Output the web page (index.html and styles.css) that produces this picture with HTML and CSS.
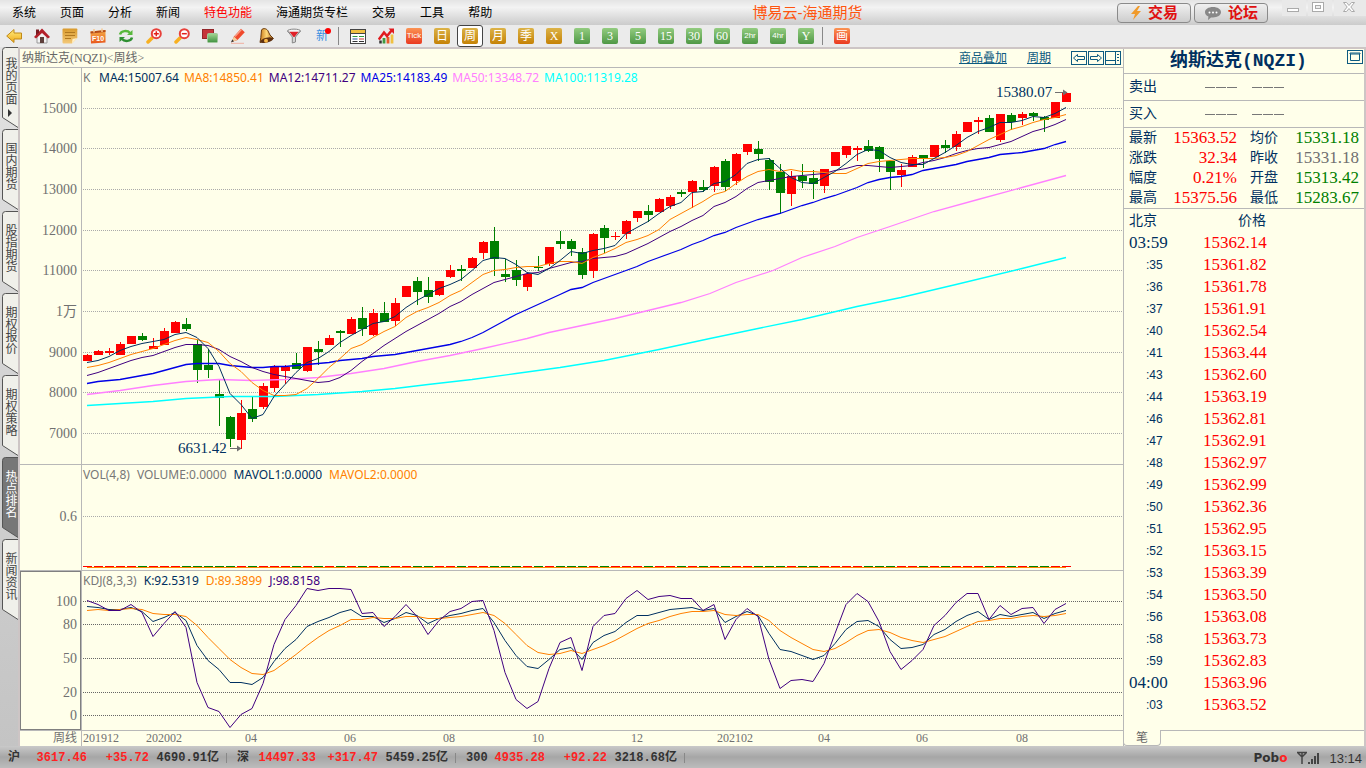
FILE: index.html
```html
<!DOCTYPE html>
<html lang="zh-CN">
<head>
<meta charset="utf-8">
<title>博易云-海通期货</title>
<link rel="stylesheet" href="styles.css">
</head>
<body>
<svg class="defs" aria-hidden="true">
  <defs>
    <linearGradient id="gold" x1="0" y1="0" x2="0" y2="1"><stop offset="0" stop-color="#ffee80"/><stop offset="1" stop-color="#f0a818"/></linearGradient>
    <linearGradient id="green" x1="0" y1="0" x2="0" y2="1"><stop offset="0" stop-color="#a5d694"/><stop offset="1" stop-color="#3f9140"/></linearGradient>
    <linearGradient id="cal" x1="0" y1="0" x2="0" y2="1"><stop offset="0" stop-color="#f6b04a"/><stop offset="1" stop-color="#e8561c"/></linearGradient>
    <linearGradient id="note" x1="0" y1="0" x2="0" y2="1"><stop offset="0" stop-color="#d99a2c"/><stop offset="1" stop-color="#f3c878"/></linearGradient>
    <linearGradient id="bell" x1="0" y1="0" x2="1" y2="0"><stop offset="0" stop-color="#c87818"/><stop offset=".5" stop-color="#ffd878"/><stop offset="1" stop-color="#a85c10"/></linearGradient>
    <symbol id="tab" viewBox="0 0 16 82"><path d="M16 .5H3.500Q.5.5.5 3.500V70.500L16 80.500" /></symbol>
  </defs>
</svg>

<header class="titlebar">
  <nav class="menu">
    <button>系统</button><button>页面</button><button>分析</button><button>新闻</button><button class="hot">特色功能</button><button>海通期货专栏</button><button>交易</button><button>工具</button><button>帮助</button>
  </nav>
  <h1 class="app-title">博易云-海通期货</h1>
  <div class="title-actions">
    <button class="pill"><svg width="12" height="16" viewBox="0 0 12 16"><path d="M8 1 1 9h4l-2 6 8-9H7l3-5z" fill="#f09a2a"/></svg>交易</button>
    <button class="pill"><svg width="18" height="16" viewBox="0 0 18 16"><path d="M9 2c4.500 0 8 2.200 8 5.200s-3.500 5.200-8 5.200l-2 0-3 2.600.4-3.400C2.200 10.600 1 9 1 7.200 1 4.200 4.500 2 9 2z" fill="#888"/><g fill="#fff"><circle cx="5.500" cy="7.500" r="1"/><circle cx="9" cy="7.500" r="1"/><circle cx="12.500" cy="7.500" r="1"/></g></svg>论坛</button>
    <div class="window-controls">
      <button aria-label="最小化"><svg width="24" height="16"><rect x="5.500" y="8.500" width="11" height="3" fill="#fff" stroke="#aaa"/></svg></button>
      <button aria-label="最大化"><svg width="24" height="16"><rect x="4.500" y="2.500" width="11" height="9" fill="#fff" stroke="#aaa"/><rect x="7.500" y="5.500" width="5" height="3" fill="#eee" stroke="#aaa"/></svg></button>
      <button aria-label="关闭"><svg width="32" height="16"><path d="M9.500 2.500h3L15 5.500l2.500-3h3L16.800 7l3.700 4.500h-3L15 8.500l-2.500 3h-3L13.200 7z" fill="#fff" stroke="#aaa"/></svg></button>
    </div>
  </div>
</header>

<div class="toolbar">
  <button aria-label="后退"><svg viewBox="0 0 16 16"><path d="M8 1.500V5h7.500v6H8v3.500L.7 8z" fill="url(#gold)" stroke="#c08a18"/></svg></button>
  <button aria-label="首页"><svg viewBox="0 0 16 16"><path d="M3 8v7h10V8L8 3z" fill="#f2f2f2" stroke="#999"/><path d="M0 9 8 .5 16 9l-2 1.500L8 5l-6 5.500z" fill="#b3202a"/><path d="M2 1.500h3v3L2 7.500z" fill="#7a1a20"/><rect x="6" y="9" width="4" height="6" fill="#5e3f3a"/></svg></button>
  <button aria-label="便签"><svg viewBox="0 0 16 16"><path d="M1.500.5h13q.8 0 .8.8V10L10 15.500H1.500q-1 0-1-1V1.500q0-1 1-1z" fill="url(#note)"/><path d="M10 15.500 10.500 11 15.300 10z" fill="#fff0c8"/><path d="M3 4.500h10M3 7.500h10M3 10.500h6" stroke="#b07820"/></svg></button>
  <button aria-label="F10"><svg viewBox="0 0 16 16"><path d="M.5 3.500 15.500 2v12.500L1 15.500z" fill="url(#cal)"/><path d="M.5 3.500 15.500 2v2L.6 5.500z" fill="#b54a17"/><path d="M4 1v3.500M12 .5V4" stroke="#f8c890" stroke-width="1.500"/><text x="8" y="13" class="ico-text">F10</text></svg></button>
  <button aria-label="刷新"><svg viewBox="0 0 16 16"><path d="M2 6.500C3 2.500 9.500 2 12 5" fill="none" stroke="#58b83c" stroke-width="2.500"/><path d="M14.500 2v5H9z" fill="#58b83c"/><path d="M14 9.500C13 13.500 6.500 14 4 11" fill="none" stroke="#2f8f32" stroke-width="2.500"/><path d="M1.500 14V9H7z" fill="#2f8f32"/></svg></button>
  <button aria-label="放大"><svg viewBox="0 0 16 16"><path d="M2 14 6 10" stroke="#f8b020" stroke-width="3.500" stroke-linecap="round"/><circle cx="10.300" cy="5.700" r="4.500" fill="#fff" stroke="#e8403a" stroke-width="2"/><path d="M7.800 5.700h5M10.300 3.200v5" stroke="#e1201a" stroke-width="1.500"/></svg></button>
  <button aria-label="缩小"><svg viewBox="0 0 16 16"><path d="M2 14 6 10" stroke="#f8b020" stroke-width="3.500" stroke-linecap="round"/><circle cx="10.300" cy="5.700" r="4.500" fill="#fff" stroke="#e8403a" stroke-width="2"/><path d="M7.800 5.700h5" stroke="#e1201a" stroke-width="1.500"/></svg></button>
  <button aria-label="叠加"><svg viewBox="0 0 16 16"><rect x=".5" y="1.500" width="11" height="9" fill="#c5343a" stroke="#93262a"/><rect x="5.500" y="5.500" width="10" height="9" rx="1" fill="url(#green)" stroke="#9fc79a"/></svg></button>
  <button aria-label="画笔"><svg viewBox="0 0 16 16"><path d="M1.500 14 4 8.500 11 .8l3.800 3.400L7.500 12z" fill="#f0492c"/><path d="M5 8.500 11.500 1.500" stroke="#f8a088" stroke-width="1.200"/><path d="M1.500 14 4 8.500 7.500 12z" fill="#f3cf9b"/><path d="M1 14.500l1.200-3 1.800 1.800z" fill="#333"/><path d="M1 15.300h13" stroke="#f0b0a0"/></svg></button>
  <button aria-label="预警"><svg viewBox="0 0 16 16"><path d="M3.500 2C5-.5 9.500.5 10.500 4l1.500 3 3.500 3.500L2 14.500l.8-5z" fill="url(#bell)" stroke="#6a3c10"/><ellipse cx="8.700" cy="12.200" rx="6.600" ry="2.400" fill="#5e3010" transform="rotate(-14 8.700 12.200)"/><circle cx="8" cy="12.800" r="2" fill="#f8b848"/></svg></button>
  <button aria-label="筛选"><svg viewBox="0 0 16 16"><path d="M1.500 3 6.300 9v6l3.200-1V9l5-6z" fill="#d4d4d4" stroke="#888"/><ellipse cx="8" cy="3" rx="6.500" ry="1.900" fill="#f4f4f4" stroke="#888"/><path d="M3.500 3.800h9L8.500 9h-1z" fill="#e02028"/></svg></button>
  <button class="new">新</button>
  <span class="divider"></span>
  <button aria-label="报价表"><svg viewBox="0 0 16 16"><rect x=".5" y="1.500" width="15" height="14" fill="#fff" stroke="#444"/><path d="M1 2h14v3H1z" fill="#f0c040"/><path d="M1 5.500h14" stroke="#444"/><path d="M2.500 8.500h5M9 8.500h5" stroke="#2e9a38"/><path d="M2.500 11h5" stroke="#234a9a"/><path d="M9 11h5" stroke="#d03030"/><path d="M2.500 13.500h5M9 13.500h5" stroke="#333"/></svg></button>
  <button aria-label="走势"><svg viewBox="0 0 16 16"><path d="M2.500 12.500v3" stroke="#333" stroke-width="2.500"/><path d="M6 10v5.500" stroke="#3f9a40" stroke-width="2.800"/><path d="M10 9v6.500" stroke="#e85a2a" stroke-width="2.800"/><path d="M14 6.500v9" stroke="#f0c040" stroke-width="2.800"/><path d="M.8 11.500 6 4.500l3 3.500L14 2" fill="none" stroke="#e01c20" stroke-width="2.500"/><path d="M10.500.5H16V6z" fill="#e01c20"/></svg></button>
  <button><span class="sq red tiny">Tick</span></button>
  <button><span class="sq gold">日</span></button>
  <button class="active"><span class="sq gold">周</span></button>
  <button><span class="sq gold">月</span></button>
  <button><span class="sq gold">季</span></button>
  <button><span class="sq gold">X</span></button>
  <button><span class="sq green">1</span></button>
  <button><span class="sq green">3</span></button>
  <button><span class="sq green">5</span></button>
  <button><span class="sq green">15</span></button>
  <button><span class="sq green">30</span></button>
  <button><span class="sq green">60</span></button>
  <button><span class="sq green tiny">2hr</span></button>
  <button><span class="sq green tiny">4hr</span></button>
  <button><span class="sq green">Y</span></button>
  <span class="divider"></span>
  <button><span class="sq red">画</span></button>
</div>

<main class="workspace">
  <nav class="side-tabs">
    <button class="side-tab first"><svg><use href="#tab"/></svg><span>我的页面</span><i class="arrow"></i></button>
    <button class="side-tab"><svg><use href="#tab"/></svg><span>国内期货</span></button>
    <button class="side-tab"><svg><use href="#tab"/></svg><span>股指期货</span></button>
    <button class="side-tab"><svg><use href="#tab"/></svg><span>期权报价</span></button>
    <button class="side-tab"><svg><use href="#tab"/></svg><span>期权策略</span></button>
    <button class="side-tab selected"><svg><use href="#tab"/></svg><span>热点排名</span></button>
    <button class="side-tab"><svg><use href="#tab"/></svg><span>新闻资讯</span></button>
  </nav>

  <section class="chart">
    <div class="chart-head">
      <h2>纳斯达克(NQZI)&lt;周线&gt;</h2>
      <a href="#overlay">商品叠加</a>
      <a href="#period">周期</a>
      <div class="nav-icons">
        <button aria-label="向左"><svg width="16" height="14"><rect x=".5" y=".5" width="15" height="13"/><path d="M2.500 7 6.500 3.500V5.500H13.500V8.500H6.500V10.500z"/></svg></button>
        <button aria-label="向右"><svg width="16" height="14"><rect x=".5" y=".5" width="15" height="13"/><path d="M13.500 7 9.500 3.500V5.500H2.500V8.500H9.500V10.500z"/></svg></button>
        <button aria-label="布局"><svg width="16" height="14"><rect x=".5" y=".5" width="15" height="13"/><path d="M10.500 1v12M1 9.500h9M12 3.500h2M12 6.500h2M12 9.500h2"/></svg></button>
      </div>
    </div>

    <div class="pane">
      <div class="legend"><span class="lead">K</span><span class="c-ma4">MA4:15007.64</span><span class="c-ma8">MA8:14850.41</span><span class="c-ma12">MA12:14711.27</span><span class="c-ma25">MA25:14183.49</span><span class="c-ma50">MA50:13348.72</span><span class="c-ma100">MA100:11319.28</span></div>
      <svg class="plot price"><g transform="translate(-20 -68)">
        <g class="grid" id="price-grid"></g>
        <g class="axis">
          <text x="77" y="113">15000</text><text x="77" y="153">14000</text><text x="77" y="194">13000</text><text x="77" y="235">12000</text><text x="77" y="275">11000</text><text x="77" y="316">1万</text><text x="77" y="357">9000</text><text x="77" y="397">8000</text><text x="77" y="438">7000</text>
        </g>
        <g id="candles" class="crisp"></g>
        <g id="averages" class="lines"></g>
        <g class="mark"><text x="996" y="97">15380.07</text><path d="M1055 92.500h12"/><path class="tip" d="M1063 89.500l4.500 3-4.500 3z"/><text x="178" y="453">6631.42</text><path d="M230 448.500h11"/><path class="tip" d="M237 445.500l4.500 3-4.500 3z"/></g>
        <path class="rule" d="M81.500 68V464"/>
      </g></svg>
    </div>

    <div class="pane">
      <div class="legend wide"><span class="c-mute">VOL(4,8)</span><span class="c-mute">VOLUME:0.0000</span><span class="c-ma4">MAVOL1:0.0000</span><span class="c-ma8">MAVOL2:0.0000</span></div>
      <svg class="plot volume"><g transform="translate(-20 -465)">
        <g class="grid" id="volume-grid"></g>
        <g class="axis"><text x="77" y="521">0.6</text></g>
        <path d="M87 567.500H1066" stroke="#f80"/>
        <g id="volumes" class="crisp"></g>
        <path class="rule" d="M81.500 465V570"/>
      </g></svg>
    </div>

    <div class="pane">
      <div class="legend wide"><span class="c-mute">KDJ(8,3,3)</span><span class="c-ma4">K:92.5319</span><span class="c-ma8">D:89.3899</span><span class="c-ma12">J:98.8158</span></div>
      <svg class="plot kdj"><g transform="translate(-20 -571)">
        <g class="grid dark" id="kdj-grid"></g>
        <g class="axis"><text x="77" y="606">100</text><text x="77" y="629">80</text><text x="77" y="663">50</text><text x="77" y="697">20</text><text x="77" y="720">0</text></g>
        <g id="oscillator" class="lines"></g>
        <path class="rule" d="M81.500 571V730"/>
        <rect x="20.500" y="571.500" width="60" height="158" fill="none" stroke="#808080"/>
      </g></svg>
    </div>

    <svg class="plot dates"><g transform="translate(-20 -731)">
      <path class="rule" d="M81.500 731V746"/>
      <g class="axis"><text x="77" y="742" class="small">周线</text></g>
      <g class="date-text"><text x="83" y="742">201912</text><text x="146" y="742">202002</text><text x="245" y="742">04</text><text x="344" y="742">06</text><text x="443" y="742">08</text><text x="532" y="742">10</text><text x="631" y="742">12</text><text x="717" y="742">202102</text><text x="818" y="742">04</text><text x="916" y="742">06</text><text x="1016" y="742">08</text></g>
    </g></svg>
  </section>

  <aside class="quote">
    <div class="quote-head">
      <h2>纳斯达克(NQZI)</h2>
      <button aria-label="窗口"><svg width="16" height="14"><rect x=".5" y=".5" width="15" height="13"/><path d="M3.500 4v6.500h9V4M3 3h10v1H3z"/></svg></button>
    </div>
    <div class="side-row"><span>卖出</span><i class="dashes"></i><i class="dashes"></i></div>
    <div class="side-row"><span>买入</span><i class="dashes"></i><i class="dashes"></i></div>
    <dl class="stats">
      <dt>最新</dt><dd class="up">15363.52</dd><dt>均价</dt><dd class="down">15331.18</dd>
      <dt>涨跌</dt><dd class="up">32.34</dd><dt>昨收</dt><dd class="flat">15331.18</dd>
      <dt>幅度</dt><dd class="up">0.21%</dd><dt>开盘</dt><dd class="down">15313.42</dd>
      <dt>最高</dt><dd class="up">15375.56</dd><dt>最低</dt><dd class="down">15283.67</dd>
    </dl>
    <table class="ticks">
      <thead><tr><th>北京</th><th class="price-head">价格</th></tr></thead>
      <tbody>
        <tr><td class="full">03:59</td><td>15362.14</td></tr>
        <tr><td>:35</td><td>15361.82</td></tr>
        <tr><td>:36</td><td>15361.78</td></tr>
        <tr><td>:37</td><td>15361.91</td></tr>
        <tr><td>:40</td><td>15362.54</td></tr>
        <tr><td>:41</td><td>15363.44</td></tr>
        <tr><td>:43</td><td>15362.60</td></tr>
        <tr><td>:44</td><td>15363.19</td></tr>
        <tr><td>:46</td><td>15362.81</td></tr>
        <tr><td>:47</td><td>15362.91</td></tr>
        <tr><td>:48</td><td>15362.97</td></tr>
        <tr><td>:49</td><td>15362.99</td></tr>
        <tr><td>:50</td><td>15362.36</td></tr>
        <tr><td>:51</td><td>15362.95</td></tr>
        <tr><td>:52</td><td>15363.15</td></tr>
        <tr><td>:53</td><td>15363.39</td></tr>
        <tr><td>:54</td><td>15363.50</td></tr>
        <tr><td>:56</td><td>15363.08</td></tr>
        <tr><td>:58</td><td>15363.73</td></tr>
        <tr><td>:59</td><td>15362.83</td></tr>
        <tr><td class="full">04:00</td><td>15363.96</td></tr>
        <tr><td>:03</td><td>15363.52</td></tr>
      </tbody>
    </table>
    <div class="quote-tabs"><button>笔</button></div>
  </aside>
</main>

<footer class="statusbar">
  <div class="index"><span class="first-col"><b>沪</b><b class="up">3617.46</b></span><b class="up">+35.72</b><b>4690.91亿</b></div>
  <div class="index"><span class="first-col"><b>深</b><b class="up">14497.33</b></span><b class="up">+317.47</b><b>5459.25亿</b></div>
  <div class="index"><span class="first-col"><b>300</b><b class="up">4935.28</b></span><b class="up">+92.22</b><b>3218.68亿</b></div>
  <div class="tray"><strong class="brand">Pob<em>o</em></strong><svg width="22" height="14" viewBox="0 0 22 14"><path d="M0 1.500h10M1 2l4 4 4-4M5 2v11" fill="none" stroke="#444" stroke-width="1.500"/><path d="M11 11h2v2h-2zM14 8h2v5h-2zM17 5h2v8h-2zM20 2h2v11h-2z" fill="#444"/></svg><time>13:14</time></div>
</footer>
<script src="chart.js"></script>
</body>
</html>
```
FILE: styles.css
```css
* { box-sizing: border-box; }
body {
  margin: 0; min-height: 100vh; display: flex; flex-direction: column; overflow-x: hidden;
  font: 12px/16px "Liberation Serif", "Noto Sans CJK SC", sans-serif;
  color: #003060; background: #ebebeb;
}
button { border: 0; padding: 0; margin: 0; background: none; font: inherit; color: inherit; display: flex; align-items: center; justify-content: center; }
h1, h2, dl, dd, dt { margin: 0; font-weight: normal; }
i, em { font-style: normal; }
.defs { position: absolute; width: 0; height: 0; }

.titlebar { height: 25px; display: flex; justify-content: space-between; align-items: center; background: linear-gradient(#e4e4e4, #f3f3f3 30%, #cbcbcb); }
.menu { display: flex; }
.menu button { padding: 0 12px; color: #000; line-height: 26px; }
.menu .hot { color: #f00; }
.app-title { font: 15px/24px "Liberation Sans", "Noto Sans CJK SC", sans-serif; color: #ff5510; margin-right: 6px; }
.title-actions { display: flex; align-items: center; gap: 3px; height: 25px; }
.pill { width: 74px; height: 20px; gap: 6px; border: 1px solid #8a8a8a; border-radius: 4px; background: linear-gradient(#f0f0f0, #cdcdcd); color: #e01010; font-size: 15px; font-weight: bold; }
.window-controls { display: flex; gap: 2px; align-self: flex-start; margin-left: 11px; }
.window-controls button { height: 16px; background: #e9e9e9; }

.toolbar { height: 22px; display: flex; align-items: center; background: #ebebeb; }
.toolbar button { width: 28px; height: 22px; }
.toolbar svg { width: 16px; height: 16px; }
.ico-text { font: bold 7px "Liberation Sans", sans-serif; fill: #fff; text-anchor: middle; }
.toolbar .new { position: relative; color: #3a8fe0; font-size: 12px; }
.new::after { content: ""; position: absolute; right: 5px; top: 3px; width: 6px; height: 6px; border-radius: 50%; background: #f00; }
.divider { width: 8px; height: 18px; background: linear-gradient(90deg, transparent 2px, #888 2px, #888 3px, transparent 3px); }
.sq { width: 16px; height: 16px; border-radius: 2px; color: #fff; text-align: center; font: 12px/16px "Liberation Serif", "Noto Sans CJK SC", sans-serif; }
.sq.tiny { font: 8px/16px "Liberation Sans", sans-serif; }
.sq.gold { background: linear-gradient(#dcb348, #c58205); }
.sq.green { background: linear-gradient(#93cc80, #4f9845); }
.sq.red { background: linear-gradient(#fb9353, #ea3a20); }
.toolbar .active { width: 26px; margin: 0 1px; border: 1px solid #444; border-radius: 3px; background: #fff; }

.workspace { flex: 1; display: flex; }
.side-tabs { width: 18px; padding: 0 0 0 2px; background: linear-gradient(#e2e2e2, #c4c4c4); }
.side-tab { position: relative; width: 16px; height: 82px; padding-top: 13px; flex-direction: column; justify-content: flex-start; color: #444; }
.side-tab.first { padding-top: 10px; }
.side-tab svg { position: absolute; left: 0; top: 0; width: 16px; height: 82px; fill: #f0f0ea; stroke: #555; }
.side-tab.selected svg { fill: #777; }
.side-tab.selected { color: #fff; }
.side-tab span { position: relative; writing-mode: vertical-rl; line-height: 14px; }
.arrow { position: relative; margin-top: 4px; border: 4px solid transparent; border-left-color: #333; border-right: 0; }

.chart { flex: 1; min-width: 0; border: solid #cdc5c5; border-width: 2px 0 0 2px; background: #ffffea; display: flex; flex-direction: column; }
.chart-head { height: 19px; display: flex; align-items: center; padding: 0 2px; border-bottom: 1px solid #b8b8b8; }
.chart-head h2 { font-size: 12px; line-height: 18px; color: #666; margin-right: auto; }
.chart-head a { color: #0d5a80; margin-right: 20px; }
.nav-icons { display: flex; gap: 1px; }
.nav-icons svg, .quote-head svg { fill: none; stroke: #0d5a80; }
.pane { position: relative; display: flex; border-bottom: 1px solid #b8b8b8; }
.legend { position: absolute; left: 63px; top: 1px; display: flex; gap: 5px; font: 12px/17px "Noto Sans", sans-serif; white-space: nowrap; }
.legend.wide { gap: 7px; }
.lead { width: 11px; color: #777; }
.c-mute { color: #777; }
.c-ma4 { color: #003060; }
.c-ma8 { color: #ff8000; }
.c-ma12 { color: #400080; }
.c-ma25 { color: #0000e6; }
.c-ma50 { color: #ff80ff; }
.c-ma100 { color: #00ffff; }
.plot { display: block; width: 100%; }
.price { height: 396px; }
.volume { height: 105px; }
.kdj { height: 159px; }
.dates { height: 15px; }
.grid line { stroke: #aaa; stroke-dasharray: 1 1; shape-rendering: crispEdges; }
.grid.dark line { stroke: #666; }
.rule { stroke: #b8b8b8; fill: none; }
.crisp { shape-rendering: crispEdges; }
.rise { fill: #f00; }
.fall { fill: #008000; }
.axis text { font: 14px "Liberation Serif", "Noto Sans CJK SC", sans-serif; fill: #707070; text-anchor: end; }
.axis .small { font-size: 12px; }
.date-text text { font: 12px "Liberation Serif", sans-serif; fill: #707070; }
.mark text { font: 15px "Liberation Serif", sans-serif; fill: #003060; }
.mark path { fill: none; stroke: #707070; }
.mark .tip { fill: #707070; stroke: none; }
.lines polyline { fill: none; stroke-width: 1; }
.s-ma4 { stroke: #003060; }
.s-ma8 { stroke: #ff8000; }
.s-ma12 { stroke: #400080; }
.lines .s-ma25, .lines .s-ma50, .lines .s-ma100 { stroke-width: 1.3; }
.s-ma25 { stroke: #0000e6; }
.s-ma50 { stroke: #ff80ff; }
.s-ma100 { stroke: #00ffff; }

.quote { width: 243px; display: flex; flex-direction: column; border: solid #cdc5c5; border-width: 2px 2px 0 0; box-shadow: inset 1px 0 #b8b8b8; background: #ffffea; font-size: 14px; }
.quote-head { display: flex; align-items: center; height: 25px; padding: 0 1px 0 47px; border-bottom: 1px solid #b8b8b8; }
.quote-head h2 { font: bold 18px/26px "Liberation Mono", "Noto Sans CJK SC", monospace; white-space: nowrap; }
.quote-head button { margin-left: auto; align-self: flex-start; margin-top: 1px; }
.side-row { height: 27px; display: flex; align-items: center; padding-left: 6px; gap: 15px; border-bottom: 1px solid #b8b8b8; }
.side-row span { margin-right: 33px; }
.dashes { width: 32px; height: 1px; background: repeating-linear-gradient(90deg, #777 0 10px, transparent 10px 11px); }
.stats { display: grid; grid-template-columns: 28px 80px 41px 81px; padding: 0 0 0 6px; line-height: 20px; border-bottom: 1px solid #b8b8b8; }
.stats dt:nth-of-type(even) { margin-left: 13px; white-space: nowrap; }
.stats dd { text-align: right; font-size: 17px; }
.up { color: #f00; }
.down { color: #008000; }
.flat { color: #707070; }
.ticks { border-collapse: collapse; width: 100%; table-layout: fixed; }
.ticks th { padding: 0 0 0 6px; width: 80px; height: 23px; text-align: left; font-weight: normal; }
.ticks .price-head { width: auto; padding-left: 35px; }
.ticks td { padding: 0; height: 22px; line-height: 22px; color: #f00; font-size: 17px; }
.ticks td:first-child { padding-left: 23px; color: #003060; font: 12px/22px "Liberation Sans", sans-serif; }
.ticks td.full:first-child { padding-left: 6px; font: 17px/22px "Liberation Serif", serif; }
.quote-tabs { margin-top: auto; height: 16px; box-shadow: inset 0 1px #b8b8b8; }
.quote-tabs button { width: 38px; height: 16px; border: 1px solid #b8b8b8; border-top: 0; border-radius: 0 0 4px 4px; background: #ffffea; color: #666; font-size: 12px; }

.statusbar { height: 22px; display: flex; align-items: center; padding: 2px 4px 0 8px; background: linear-gradient(#c9c9c9, #a6a6a6 50%, #bcbcbc); color: #333; font: 12px/20px "Liberation Mono", "Noto Sans CJK SC", monospace; }
.index { display: grid; grid-template-columns: 79px 62px 70px; padding-right: 8px; margin-right: 10px; background: linear-gradient(#888, #888) right center / 1px 10px no-repeat; text-align: right; }
.index .first-col { display: flex; justify-content: space-between; }
.statusbar .up { color: #f22; }
.tray { margin-left: auto; display: flex; align-items: center; gap: 10px; }
.brand { font: bold 12px "DejaVu Sans", sans-serif; }
.brand em { color: #f22; }
.tray time { font: 13px "Liberation Sans", sans-serif; }
```
FILE: chart.js
```js
const NS = "http://www.w3.org/2000/svg";
const FIRST_X = 87;
const STEP = 11;

function add(parent, name, attrs) {
  const el = document.createElementNS(NS, name);
  for (const key in attrs) el.setAttribute(key, attrs[key]);
  document.getElementById(parent).appendChild(el);
}

// direction, high, body top, body bottom, low
const candles = `r354,355,361,361 r350,351,355,355 r348,351,353,355 r342,344,355,355 r336,336,344,344 g333,336,340,341
r338,346,349,349 r328,331,345,345 r321,322,333,333 g318,324,329,331 g340,344,370,383 g349,365,370,378 g379,394,398,426
g416,417,439,447 r400,413,440,449 g397,409,419,422 r383,386,407,409 r365,367,388,392 r365,367,371,384 g353,363,369,369
r347,347,371,372 g341,349,352,365 r335,338,345,345 g330,331,333,347 r317,319,334,334 g307,318,329,336 r309,313,335,336
g302,313,322,322 r298,303,321,326 r286,286,297,297 g277,281,292,305 g277,290,297,303 r281,281,295,296 r265,270,277,278
g265,269,271,281 r257,258,268,268 r241,242,253,259 g227,241,259,276 g259,274,277,282 g260,270,280,286 r273,274,287,291
g256,267,268,271 r247,247,264,266 g231,241,244,249 g239,241,249,256 g248,252,275,279 r233,234,271,278 g225,228,238,253
r232,236,237,240 r220,221,234,239 r211,211,218,222 g205,211,215,222 r198,199,212,212 r195,197,206,209 g190,192,194,197
r180,181,192,208 g180,187,190,192 r166,167,186,192 g159,161,187,191 r153,154,181,185 r144,144,152,155 g141,149,154,161
g158,160,182,190 g164,172,193,214 r171,176,194,206 g164,176,181,188 g170,178,184,199 r169,169,186,193 r152,152,166,166
r146,146,155,158 r146,148,150,161 g140,146,151,152 g146,147,159,172 g161,161,172,190 r164,170,175,187 r155,157,167,167
g155,155,158,168 r145,145,157,157 g140,145,148,153 r131,134,147,151 r122,122,132,132 r117,120,122,134 g115,118,132,132
r114,114,140,142 g113,115,122,130 r112,114,118,125 g112,113,116,121 g116,117,120,132 r102,102,118,118 r92,93,102,102`;

candles.split(/\s+/).forEach((item, i) => {
  const cls = item[0] === "r" ? "rise" : "fall";
  const [high, top, bottom, low] = item.slice(1).split(",").map(Number);
  const x = FIRST_X + i * STEP;
  add("candles", "rect", { class: cls, x: x, y: high, width: 1, height: low - high });
  add("candles", "rect", { class: cls, x: x - 4, y: top, width: 9, height: bottom - top });
  add("volumes", "rect", { class: cls, x: x - 4, y: 566, width: 9, height: 1 });
});

function line(parent, cls, values) {
  const points = values.map((y, i) => `${FIRST_X + i * STEP},${y + 0.5}`).join(" ");
  add(parent, "polyline", { class: cls, points });
}

function sparseLine(parent, cls, pairs) {
  const points = pairs.map(([x, y]) => `${x},${y + 0.5}`).join(" ");
  add(parent, "polyline", { class: cls, points });
}

sparseLine("averages", "s-ma100", [[87,405],[120,403],[153,401],[186,398],[230,396],[274,396],[318,394],[362,391],[395,388],[428,384],[472,379],[516,373],[560,367],[604,360],[659,349],[710,338],[758,328],[802,319],[857,306],[901,297],[956,284],[1022,268],[1066,257]]);
sparseLine("averages", "s-ma50", [[87,394],[120,390],[153,385],[186,381],[219,379],[252,380],[285,379],[318,377],[351,373],[384,368],[417,361],[450,355],[483,348],[527,338],[549,332],[582,325],[615,318],[648,310],[681,302],[710,293],[736,282],[773,270],[802,257],[835,246],[857,237],[890,226],[934,211],[978,199],[1022,187],[1066,175]]);
line("averages", "s-ma25", [383,381,380,379,377,375,373,370,367,364,363,363,363,365,366,367,367,366,366,365,364,363,362,360,359,358,356,355,354,352,350,348,346,344,341,337,332,326,320,314,309,304,299,294,289,287,282,278,274,270,266,261,257,253,249,244,240,235,232,227,223,219,216,213,209,205,202,198,195,191,187,182,179,177,176,174,170,168,166,164,161,159,157,154,153,152,150,148,144,141]);
line("averages", "s-ma12", [375,372,368,364,360,357,355,351,347,344,344,345,349,356,361,367,371,374,376,378,380,382,381,377,370,361,353,345,338,331,325,319,313,306,301,294,288,282,279,276,273,272,268,265,262,261,258,257,256,253,248,243,237,231,226,220,215,206,202,196,188,182,180,178,176,175,174,173,170,168,165,165,166,167,166,165,162,160,157,153,150,148,147,144,141,136,131,128,124,119]);
line("averages", "s-ma8", [367,365,362,358,354,351,348,344,340,337,339,342,351,363,371,382,390,395,395,394,388,378,367,358,348,344,337,331,326,317,311,307,302,295,290,282,274,270,269,267,266,266,263,261,261,263,257,253,248,242,239,235,229,219,213,207,201,194,191,183,176,171,169,171,169,171,171,172,173,173,168,163,161,160,159,158,158,158,157,155,151,145,139,134,129,126,122,119,117,114]);
line("averages", "s-ma4", [362,360,356,350,346,343,341,339,334,332,337,348,366,393,404,418,414,396,384,372,362,358,351,342,335,329,323,321,316,307,300,294,288,284,279,270,260,257,258,264,272,274,268,260,251,253,250,248,245,233,227,221,213,206,202,192,191,183,181,174,163,159,158,168,177,182,183,177,171,163,154,149,150,157,162,164,164,158,152,145,137,131,127,122,122,120,116,117,113,107]);

line("oscillator", "s-ma4", [606,607,609,609,607,611,621,617,612,620,645,660,669,682,682,684,677,661,648,639,626,621,617,612,609,616,616,622,618,612,615,623,618,615,613,610,608,622,640,655,666,668,659,649,647,659,642,635,631,622,615,615,612,609,608,607,610,608,622,616,611,615,633,649,651,655,659,655,643,629,621,620,626,639,648,647,644,634,629,621,615,611,619,614,616,614,612,618,613,610]);
line("oscillator", "s-ma8", [610,609,610,609,608,609,613,614,614,616,625,637,648,659,667,673,674,670,662,654,645,637,630,625,619,619,617,618,618,616,616,618,618,617,616,614,612,615,623,634,645,652,654,653,650,653,649,645,640,634,628,623,620,616,613,611,611,610,614,615,614,614,620,630,637,643,649,651,648,642,635,630,629,632,637,640,642,639,636,631,626,621,620,618,618,616,615,616,615,613]);
line("oscillator", "s-ma12", [600,604,610,610,604,612,636,623,611,627,682,707,711,727,714,708,683,644,619,605,588,590,588,588,589,613,612,626,616,604,616,634,620,611,608,601,600,630,672,699,708,701,668,642,637,670,626,615,613,598,590,599,596,595,598,598,610,604,639,619,608,616,659,688,680,679,681,663,633,604,593,601,621,651,669,660,649,625,615,602,593,593,619,605,614,608,607,623,609,603]);

const grids = {
  "price-grid": [108, 148, 189, 230, 270, 311, 352, 392, 433],
  "volume-grid": [516],
  "kdj-grid": [601, 624, 658, 692, 715]
};
for (const id in grids) {
  for (const y of grids[id]) add(id, "line", { x1: 83, x2: "110%", y1: y + 0.5, y2: y + 0.5 });
}
```
